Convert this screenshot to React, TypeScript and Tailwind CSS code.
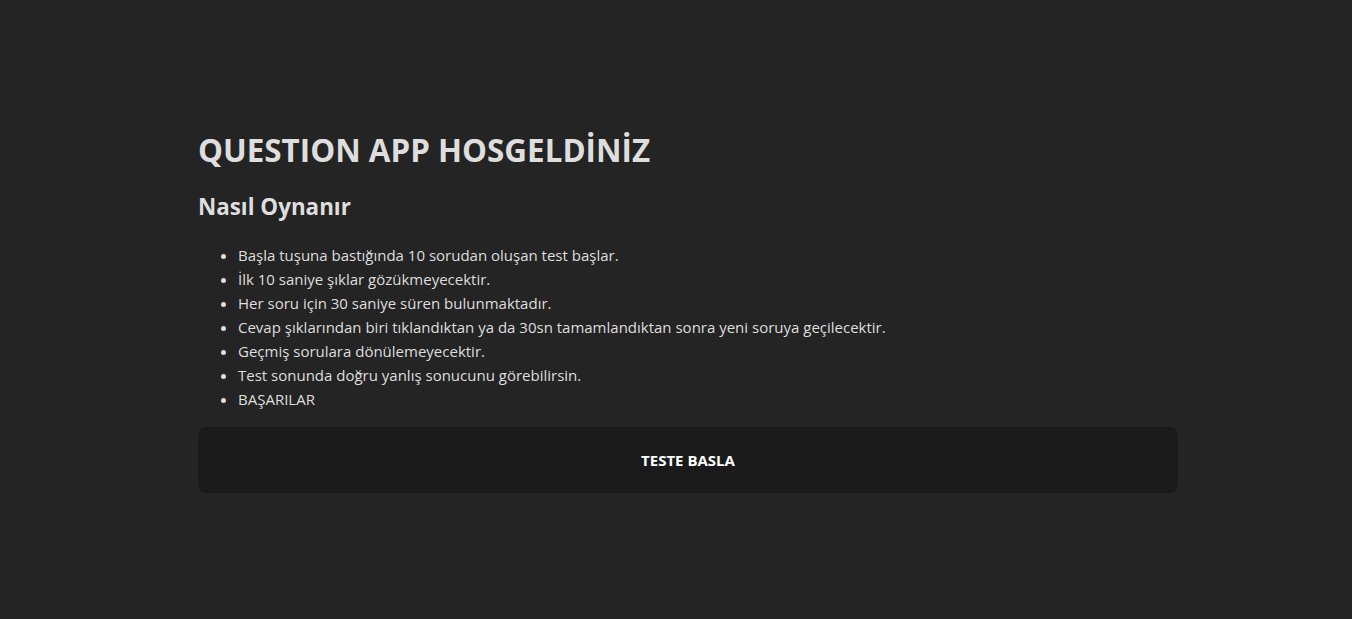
export default function App() {
  const items = [
    "Başla tuşuna bastığında 10 sorudan oluşan test başlar.",
    "İlk 10 saniye şıklar gözükmeyecektir.",
    "Her soru için 30 saniye süren bulunmaktadır.",
    "Cevap şıklarından biri tıklandıktan ya da 30sn tamamlandıktan sonra yeni soruya geçilecektir.",
    "Geçmiş sorulara dönülemeyecektir.",
    "Test sonunda doğru yanlış sonucunu görebilirsin.",
    "BAŞARILAR",
  ];
  return (
    <div
      className="min-h-[619px] w-full bg-[#242424] text-[#dedede] pl-[198px] pt-[131px]"
      style={{ fontFamily: '"Open Sans", "Noto Sans", sans-serif' }}
    >
      <div className="w-[980px] flex flex-col">
        <h1 className="text-[31.4px] leading-[38px] font-bold">QUESTION APP HOSGELDİNİZ</h1>
        <h2 className="mt-[23px] text-[22.4px] leading-[29px] font-bold">Nasıl Oynanır</h2>
        <ul className="mt-[22px] list-disc pl-[40px] text-[15px] leading-[24px]">
          {items.map((t) => (
            <li key={t}>{t}</li>
          ))}
        </ul>
        <button className="mt-[16px] h-[66px] w-full rounded-[8px] bg-[#1a1a1a] text-[15px] font-bold text-white">
          TESTE BASLA
        </button>
      </div>
    </div>
  );
}
